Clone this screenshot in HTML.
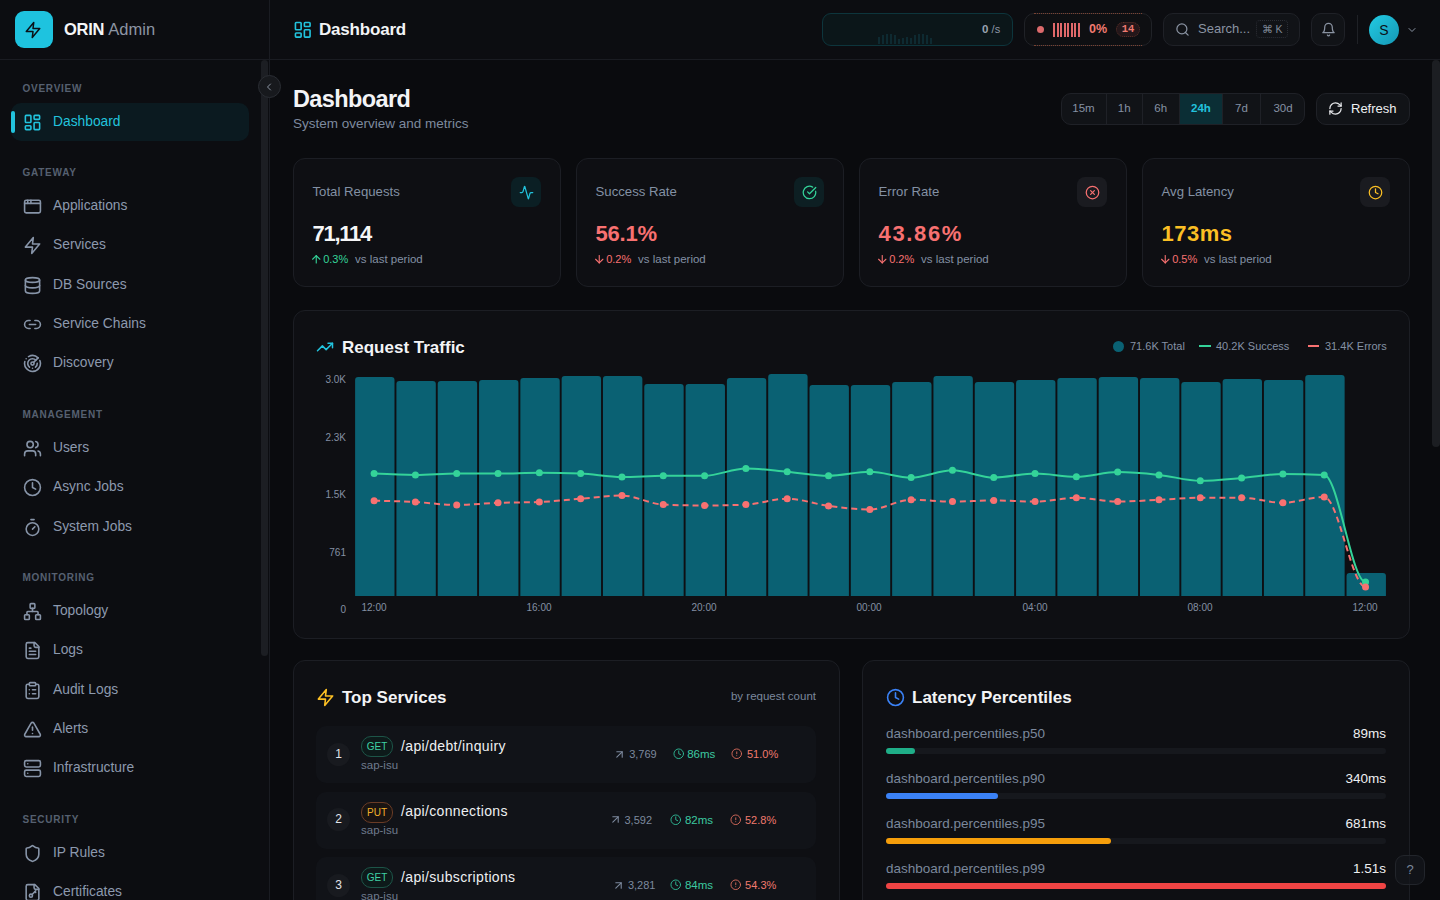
<!DOCTYPE html>
<html><head><meta charset="utf-8"><style>*{box-sizing:border-box;margin:0;padding:0}
html,body{width:1440px;height:900px;overflow:hidden;background:#0a0b0e;font-family:"Liberation Sans",sans-serif;color:#e6e8eb}
.abs{position:absolute}
svg{display:block}
#sb{position:absolute;left:0;top:0;width:270px;height:900px;background:#0c0d11;border-right:1px solid #1a1c22}
#sbh{position:absolute;left:0;top:0;width:269px;height:60px;border-bottom:1px solid #1a1c22}
.logo{position:absolute;left:15px;top:11px;width:38px;height:37px;border-radius:9px;background:#1ec3df}
.brand{position:absolute;left:64px;top:19px;font-size:16.5px;line-height:20px;font-weight:bold;color:#f5f6f7;letter-spacing:-0.3px}
.brand span{font-weight:normal;color:#8d95a3;letter-spacing:0}
.sec{position:absolute;left:22.5px;font-size:10px;line-height:10px;font-weight:bold;letter-spacing:0.75px;color:#566070}
.it{position:absolute;left:11px;width:238px;height:38px;border-radius:10px}
.it svg{position:absolute;left:12px;top:9.6px}
.it .t{position:absolute;left:42px;top:11px;font-size:13.8px;line-height:16px;color:#8c99ae}
.it.act{background:#0b1a20}
.it.act .t{color:#22c3dd}
.it.act:before{content:"";position:absolute;left:0;top:8px;width:4px;height:22px;border-radius:2px;background:#22c3dd}
#hd{position:absolute;left:270px;top:0;width:1170px;height:60px;background:#0c0d11;border-bottom:1px solid #1a1c22}
.card{background:#0e0f13;border:1px solid #1c1e24;border-radius:12px}
.btn{background:#111317;border:1px solid #1f2127;border-radius:10px}
.tw{background:#0b1619;border:1px solid #0d353c;border-radius:9px}
.ew{background:#0e0f12;border:1px solid #202227;border-radius:10px}
</style></head><body>
<div id="sb"><div id="sbh"><div class="logo"><svg style="position:absolute;left:9.4px;top:9.5px" width="18" height="18" viewBox="0 0 24 24" fill="none" stroke="#0a1218" stroke-width="2" stroke-linecap="round" stroke-linejoin="round" ><polygon points="13 2 3 14 12 14 11 22 21 10 12 10 13 2"/></svg></div><div class="brand">ORIN <span>Admin</span></div></div>
<div class="sec" style="top:84px">OVERVIEW</div>
<div class="sec" style="top:168px">GATEWAY</div>
<div class="sec" style="top:410px">MANAGEMENT</div>
<div class="sec" style="top:573px">MONITORING</div>
<div class="sec" style="top:815px">SECURITY</div>
<div class="it act" style="top:103px"><svg width="19" height="19" viewBox="0 0 24 24" fill="none" stroke="#22c3dd" stroke-width="2" stroke-linecap="round" stroke-linejoin="round"><rect width="7" height="9" x="3" y="3" rx="1"/><rect width="7" height="5" x="14" y="3" rx="1"/><rect width="7" height="9" x="14" y="12" rx="1"/><rect width="7" height="5" x="3" y="16" rx="1"/></svg><div class="t">Dashboard</div></div>
<div class="it" style="top:187px"><svg width="19" height="19" viewBox="0 0 24 24" fill="none" stroke="#8794a8" stroke-width="2" stroke-linecap="round" stroke-linejoin="round"><rect x="2" y="4" width="20" height="16" rx="2"/><path d="M10 4v4"/><path d="M2 8h20"/><path d="M6 4v4"/></svg><div class="t">Applications</div></div>
<div class="it" style="top:226px"><svg width="19" height="19" viewBox="0 0 24 24" fill="none" stroke="#8794a8" stroke-width="2" stroke-linecap="round" stroke-linejoin="round"><polygon points="13 2 3 14 12 14 11 22 21 10 12 10 13 2"/></svg><div class="t">Services</div></div>
<div class="it" style="top:266px"><svg width="19" height="19" viewBox="0 0 24 24" fill="none" stroke="#8794a8" stroke-width="2" stroke-linecap="round" stroke-linejoin="round"><ellipse cx="12" cy="5" rx="9" ry="3"/><path d="M3 5V19A9 3 0 0 0 21 19V5"/><path d="M3 12A9 3 0 0 0 21 12"/></svg><div class="t">DB Sources</div></div>
<div class="it" style="top:305px"><svg width="19" height="19" viewBox="0 0 24 24" fill="none" stroke="#8794a8" stroke-width="2" stroke-linecap="round" stroke-linejoin="round"><path d="M9 17H7A5 5 0 0 1 7 7h2"/><path d="M15 7h2a5 5 0 1 1 0 10h-2"/><line x1="8" x2="16" y1="12" y2="12"/></svg><div class="t">Service Chains</div></div>
<div class="it" style="top:344px"><svg width="19" height="19" viewBox="0 0 24 24" fill="none" stroke="#8794a8" stroke-width="2" stroke-linecap="round" stroke-linejoin="round"><path d="M19.07 4.93A10 10 0 0 0 6.99 3.34"/><path d="M4 6h.01"/><path d="M2.29 9.62A10 10 0 1 0 21.31 8.35"/><path d="M16.24 7.76A6 6 0 1 0 8.23 16.67"/><path d="M12 18h.01"/><path d="M17.99 11.66A6 6 0 0 1 15.77 16.67"/><circle cx="12" cy="12" r="2"/><path d="m13.41 10.59 5.66-5.66"/></svg><div class="t">Discovery</div></div>
<div class="it" style="top:429px"><svg width="19" height="19" viewBox="0 0 24 24" fill="none" stroke="#8794a8" stroke-width="2" stroke-linecap="round" stroke-linejoin="round"><path d="M16 21v-2a4 4 0 0 0-4-4H6a4 4 0 0 0-4 4v2"/><circle cx="9" cy="7" r="4"/><path d="M22 21v-2a4 4 0 0 0-3-3.87"/><path d="M16 3.13a4 4 0 0 1 0 7.75"/></svg><div class="t">Users</div></div>
<div class="it" style="top:468px"><svg width="19" height="19" viewBox="0 0 24 24" fill="none" stroke="#8794a8" stroke-width="2" stroke-linecap="round" stroke-linejoin="round"><circle cx="12" cy="12" r="10"/><polyline points="12 6 12 12 16 14"/></svg><div class="t">Async Jobs</div></div>
<div class="it" style="top:508px"><svg width="19" height="19" viewBox="0 0 24 24" fill="none" stroke="#8794a8" stroke-width="2" stroke-linecap="round" stroke-linejoin="round"><line x1="10" x2="14" y1="2" y2="2"/><line x1="12" x2="15" y1="14" y2="11"/><circle cx="12" cy="14" r="8"/></svg><div class="t">System Jobs</div></div>
<div class="it" style="top:592px"><svg width="19" height="19" viewBox="0 0 24 24" fill="none" stroke="#8794a8" stroke-width="2" stroke-linecap="round" stroke-linejoin="round"><rect x="16" y="16" width="6" height="6" rx="1"/><rect x="2" y="16" width="6" height="6" rx="1"/><rect x="9" y="2" width="6" height="6" rx="1"/><path d="M5 16v-3a1 1 0 0 1 1-1h12a1 1 0 0 1 1 1v3"/><path d="M12 12V8"/></svg><div class="t">Topology</div></div>
<div class="it" style="top:631px"><svg width="19" height="19" viewBox="0 0 24 24" fill="none" stroke="#8794a8" stroke-width="2" stroke-linecap="round" stroke-linejoin="round"><path d="M15 2H6a2 2 0 0 0-2 2v16a2 2 0 0 0 2 2h12a2 2 0 0 0 2-2V7Z"/><path d="M14 2v4a2 2 0 0 0 2 2h4"/><path d="M10 9H8"/><path d="M16 13H8"/><path d="M16 17H8"/></svg><div class="t">Logs</div></div>
<div class="it" style="top:671px"><svg width="19" height="19" viewBox="0 0 24 24" fill="none" stroke="#8794a8" stroke-width="2" stroke-linecap="round" stroke-linejoin="round"><rect width="8" height="4" x="8" y="2" rx="1" ry="1"/><path d="M16 4h2a2 2 0 0 1 2 2v14a2 2 0 0 1-2 2H6a2 2 0 0 1-2-2V6a2 2 0 0 1 2-2h2"/><path d="M12 11h4"/><path d="M12 16h4"/><path d="M8 11h.01"/><path d="M8 16h.01"/></svg><div class="t">Audit Logs</div></div>
<div class="it" style="top:710px"><svg width="19" height="19" viewBox="0 0 24 24" fill="none" stroke="#8794a8" stroke-width="2" stroke-linecap="round" stroke-linejoin="round"><path d="m21.73 18-8-14a2 2 0 0 0-3.48 0l-8 14A2 2 0 0 0 4 21h16a2 2 0 0 0 1.73-3"/><path d="M12 9v4"/><path d="M12 17h.01"/></svg><div class="t">Alerts</div></div>
<div class="it" style="top:749px"><svg width="19" height="19" viewBox="0 0 24 24" fill="none" stroke="#8794a8" stroke-width="2" stroke-linecap="round" stroke-linejoin="round"><rect width="20" height="8" x="2" y="2" rx="2" ry="2"/><rect width="20" height="8" x="2" y="14" rx="2" ry="2"/><line x1="6" x2="6.01" y1="6" y2="6"/><line x1="6" x2="6.01" y1="18" y2="18"/></svg><div class="t">Infrastructure</div></div>
<div class="it" style="top:834px"><svg width="19" height="19" viewBox="0 0 24 24" fill="none" stroke="#8794a8" stroke-width="2" stroke-linecap="round" stroke-linejoin="round"><path d="M20 13c0 5-3.5 7.5-7.66 8.95a1 1 0 0 1-.67-.01C7.5 20.5 4 18 4 13V6a1 1 0 0 1 1-1c2 0 4.5-1.2 6.24-2.72a1.17 1.17 0 0 1 1.52 0C14.51 3.81 17 5 19 5a1 1 0 0 1 1 1z"/></svg><div class="t">IP Rules</div></div>
<div class="it" style="top:873px"><svg width="19" height="19" viewBox="0 0 24 24" fill="none" stroke="#8794a8" stroke-width="2" stroke-linecap="round" stroke-linejoin="round"><path d="M15 2H6a2 2 0 0 0-2 2v16a2 2 0 0 0 2 2h12a2 2 0 0 0 2-2V7Z"/><path d="M14 2v4a2 2 0 0 0 2 2h4"/><circle cx="10" cy="16" r="2"/><path d="m16 10-4.5 4.5"/><path d="m15 11 1 1"/></svg><div class="t">Certificates</div></div>
</div>
<div id="hd"></div>
<svg style="position:absolute;left:293.2px;top:19.9px" width="19.5" height="19.5" viewBox="0 0 24 24" fill="none" stroke="#22c3dd" stroke-width="2" stroke-linecap="round" stroke-linejoin="round" ><rect width="7" height="9" x="3" y="3" rx="1"/><rect width="7" height="5" x="14" y="3" rx="1"/><rect width="7" height="9" x="14" y="12" rx="1"/><rect width="7" height="5" x="3" y="16" rx="1"/></svg>
<div class="abs" style="left:319px;top:19.8px;font-size:17px;letter-spacing:-0.2px;line-height:20px;font-weight:bold;color:#f3f4f6">Dashboard</div>
<div class="abs tw" style="left:822px;top:13px;width:191px;height:33px"></div><div class="abs" style="left:878.0px;top:37px;width:2px;height:7px;background:#0e2a31"></div><div class="abs" style="left:882.0px;top:35px;width:2px;height:9px;background:#0e2a31"></div><div class="abs" style="left:886.0px;top:34px;width:2px;height:10px;background:#0e2a31"></div><div class="abs" style="left:890.0px;top:34px;width:2px;height:10px;background:#0e2a31"></div><div class="abs" style="left:894.0px;top:35px;width:2px;height:9px;background:#0e2a31"></div><div class="abs" style="left:898.0px;top:39px;width:2px;height:5px;background:#0e2a31"></div><div class="abs" style="left:902.0px;top:38px;width:2px;height:6px;background:#0e2a31"></div><div class="abs" style="left:906.0px;top:37px;width:2px;height:7px;background:#0e2a31"></div><div class="abs" style="left:910.0px;top:38px;width:2px;height:6px;background:#0e2a31"></div><div class="abs" style="left:914.0px;top:35px;width:2px;height:9px;background:#0e2a31"></div><div class="abs" style="left:918.0px;top:34px;width:2px;height:10px;background:#0e2a31"></div><div class="abs" style="left:922.0px;top:34px;width:2px;height:10px;background:#0e2a31"></div><div class="abs" style="left:926.0px;top:35px;width:2px;height:9px;background:#0e2a31"></div><div class="abs" style="left:930.0px;top:38px;width:2px;height:6px;background:#0e2a31"></div><div class="abs" style="left:982px;top:22px;font-size:11.5px;line-height:14px;color:#8f98a6"><b style="color:#9aa3b0">0</b> <span style="font-size:11px">/s</span></div>
<div class="abs ew" style="left:1024px;top:13px;width:128px;height:33px"></div><div class="abs" style="left:1034px;top:13px;width:108px;height:1px;border-top:1px dotted #7a4232"></div><div class="abs" style="left:1034px;top:45px;width:108px;height:1px;border-top:1px dotted #7a4232"></div><div class="abs" style="left:1037px;top:26px;width:7px;height:7px;border-radius:50%;background:#dc6a6c"></div><div class="abs" style="left:1053.0px;top:23px;width:2.2px;height:14px;background:#e0686a"></div><div class="abs" style="left:1056.5px;top:23px;width:2.2px;height:14px;background:#e0686a"></div><div class="abs" style="left:1060.0px;top:23px;width:2.2px;height:14px;background:#e0686a"></div><div class="abs" style="left:1063.5px;top:23px;width:2.2px;height:14px;background:#e0686a"></div><div class="abs" style="left:1067.0px;top:23px;width:2.2px;height:14px;background:#e0686a"></div><div class="abs" style="left:1070.5px;top:23px;width:2.2px;height:14px;background:#e0686a"></div><div class="abs" style="left:1074.0px;top:23px;width:2.2px;height:14px;background:#e0686a"></div><div class="abs" style="left:1077.5px;top:23px;width:2.2px;height:14px;background:#e0686a"></div><div class="abs" style="left:1089px;top:22px;font-size:12.5px;line-height:15px;font-weight:bold;color:#f07a70">0%</div><div class="abs" style="left:1116px;top:22px;width:24px;height:15px;border-radius:8px;background:#24171a;border:1px dotted #5a3028;font-family:&quot;Liberation Mono&quot;,monospace;font-size:10.5px;line-height:13px;text-align:center;font-weight:bold;color:#f07a70">14</div>
<div class="abs btn" style="left:1163px;top:13px;width:137px;height:33px"></div><svg style="position:absolute;left:1175px;top:22px" width="15" height="15" viewBox="0 0 24 24" fill="none" stroke="#8a93a2" stroke-width="2" stroke-linecap="round" stroke-linejoin="round" ><circle cx="11" cy="11" r="8"/><path d="m21 21-4.3-4.3"/></svg><div class="abs" style="left:1198px;top:21px;font-size:13px;line-height:16px;color:#8a93a2">Search...</div><div class="abs" style="left:1256px;top:20px;width:32px;height:18px;border-radius:4px;border:1px dotted #2c2f36;font-size:10.5px;line-height:16px;text-align:center;color:#7f8896">&#8984; K</div>
<div class="abs btn" style="left:1311px;top:13px;width:34px;height:33px"></div><svg style="position:absolute;left:1320.5px;top:21.5px" width="15" height="15" viewBox="0 0 24 24" fill="none" stroke="#8a93a2" stroke-width="2" stroke-linecap="round" stroke-linejoin="round" ><path d="M6 8a6 6 0 0 1 12 0c0 7 3 9 3 9H3s3-2 3-9"/><path d="M10.3 21a1.94 1.94 0 0 0 3.4 0"/></svg>
<div class="abs" style="left:1357px;top:15px;width:1px;height:29px;background:#1f2126"></div>
<div class="abs" style="left:1369px;top:15px;width:30px;height:30px;border-radius:50%;background:linear-gradient(135deg,#22cbe3,#1597b5);font-size:14px;line-height:30px;text-align:center;color:#0b1016">S</div>
<svg style="position:absolute;left:1406px;top:24px" width="12" height="12" viewBox="0 0 24 24" fill="none" stroke="#8a93a2" stroke-width="2" stroke-linecap="round" stroke-linejoin="round" ><path d="m6 9 6 6 6-6"/></svg>
<div class="abs" style="left:293px;top:85.8px;font-size:23.5px;letter-spacing:-0.6px;line-height:26px;font-weight:bold;color:#f3f4f6">Dashboard</div>
<div class="abs" style="left:293px;top:116px;font-size:13.5px;line-height:16px;color:#7d8a9e">System overview and metrics</div>
<div class="abs btn" style="left:1061px;top:93px;width:244px;height:32px;overflow:hidden"><div class="abs" style="left:-1px;top:0;width:45px;height:30px;font-size:11.5px;line-height:29px;text-align:center;color:#8591a3;">15m</div><div class="abs" style="left:44px;top:0;width:35.5px;height:30px;border-left:1px solid #1f2127;font-size:11.5px;line-height:29px;text-align:center;color:#8591a3;">1h</div><div class="abs" style="left:79.5px;top:0;width:37.5px;height:30px;border-left:1px solid #1f2127;font-size:11.5px;line-height:29px;text-align:center;color:#8591a3;">6h</div><div class="abs" style="left:117px;top:0;width:43px;height:30px;background:#0b2e35;border-left:1px solid #1f2127;font-size:11.5px;line-height:29px;text-align:center;color:#22c3dd;font-weight:bold;">24h</div><div class="abs" style="left:160px;top:0;width:38px;height:30px;border-left:1px solid #1f2127;font-size:11.5px;line-height:29px;text-align:center;color:#8591a3;">7d</div><div class="abs" style="left:198px;top:0;width:45px;height:30px;border-left:1px solid #1f2127;font-size:11.5px;line-height:29px;text-align:center;color:#8591a3;">30d</div></div>
<div class="abs btn" style="left:1316px;top:93px;width:94px;height:32px"></div><svg style="position:absolute;left:1328px;top:101px" width="15" height="15" viewBox="0 0 24 24" fill="none" stroke="#e6e8eb" stroke-width="2" stroke-linecap="round" stroke-linejoin="round" ><path d="M3 12a9 9 0 0 1 9-9 9.75 9.75 0 0 1 6.74 2.74L21 8"/><path d="M21 3v5h-5"/><path d="M21 12a9 9 0 0 1-9 9 9.75 9.75 0 0 1-6.74-2.74L3 16"/><path d="M8 16H3v5"/></svg><div class="abs" style="left:1351px;top:101px;font-size:13px;line-height:16px;color:#eef0f2">Refresh</div>
<div class="abs card" style="left:293px;top:158px;width:268px;height:129px"><div class="abs" style="left:18.5px;top:25px;font-size:13.2px;line-height:16px;color:#8391a4">Total Requests</div><div class="abs" style="left:217px;top:17.8px;width:30px;height:30px;border-radius:8px;background:#0b1f24"></div><svg style="position:absolute;left:224.5px;top:25.5px" width="15" height="15" viewBox="0 0 24 24" fill="none" stroke="#22c3dd" stroke-width="2" stroke-linecap="round" stroke-linejoin="round" ><path d="M22 12h-2.48a2 2 0 0 0-1.93 1.46l-2.35 8.36a.25.25 0 0 1-.48 0L9.24 2.18a.25.25 0 0 0-.48 0l-2.35 8.36A2 2 0 0 1 4.49 12H2"/></svg><div class="abs" style="left:18.5px;top:61.5px;font-size:22px;line-height:26px;font-weight:bold;color:#f5f6f7;letter-spacing:-1.26px">71,114</div><svg style="position:absolute;left:15.75px;top:94.2px" width="12.5" height="12.5" viewBox="0 0 24 24" fill="none" stroke="#34d399" stroke-width="2.1" stroke-linecap="round" stroke-linejoin="round" ><path d="m5 12 7-7 7 7"/><path d="M12 19V5"/></svg><div class="abs" style="left:29.2px;top:93px;font-size:11px;line-height:14px;color:#34d399">0.3%</div><div class="abs" style="left:61px;top:93px;font-size:11.5px;line-height:14px;color:#8391a4">vs last period</div></div>
<div class="abs card" style="left:576px;top:158px;width:268px;height:129px"><div class="abs" style="left:18.5px;top:25px;font-size:13.2px;line-height:16px;color:#8391a4">Success Rate</div><div class="abs" style="left:217px;top:17.8px;width:30px;height:30px;border-radius:8px;background:#0d1f23"></div><svg style="position:absolute;left:224.5px;top:25.5px" width="15" height="15" viewBox="0 0 24 24" fill="none" stroke="#34d399" stroke-width="2" stroke-linecap="round" stroke-linejoin="round" ><path d="M21.801 10A10 10 0 1 1 17 3.335"/><path d="m9 11 3 3L22 4"/></svg><div class="abs" style="left:18.5px;top:61.5px;font-size:22px;line-height:26px;font-weight:bold;color:#f87171;letter-spacing:-0.2px">56.1%</div><svg style="position:absolute;left:15.75px;top:94.2px" width="12.5" height="12.5" viewBox="0 0 24 24" fill="none" stroke="#f87171" stroke-width="2.1" stroke-linecap="round" stroke-linejoin="round" ><path d="M12 5v14"/><path d="m19 12-7 7-7-7"/></svg><div class="abs" style="left:29.2px;top:93px;font-size:11px;line-height:14px;color:#f87171">0.2%</div><div class="abs" style="left:61px;top:93px;font-size:11.5px;line-height:14px;color:#8391a4">vs last period</div></div>
<div class="abs card" style="left:859px;top:158px;width:268px;height:129px"><div class="abs" style="left:18.5px;top:25px;font-size:13.2px;line-height:16px;color:#8391a4">Error Rate</div><div class="abs" style="left:217px;top:17.8px;width:30px;height:30px;border-radius:8px;background:#1a1b20"></div><svg style="position:absolute;left:224.5px;top:25.5px" width="15" height="15" viewBox="0 0 24 24" fill="none" stroke="#f87171" stroke-width="2" stroke-linecap="round" stroke-linejoin="round" ><circle cx="12" cy="12" r="10"/><path d="m15 9-6 6"/><path d="m9 9 6 6"/></svg><div class="abs" style="left:18.5px;top:61.5px;font-size:22px;line-height:26px;font-weight:bold;color:#f87171;letter-spacing:1.66px">43.86%</div><svg style="position:absolute;left:15.75px;top:94.2px" width="12.5" height="12.5" viewBox="0 0 24 24" fill="none" stroke="#f87171" stroke-width="2.1" stroke-linecap="round" stroke-linejoin="round" ><path d="M12 5v14"/><path d="m19 12-7 7-7-7"/></svg><div class="abs" style="left:29.2px;top:93px;font-size:11px;line-height:14px;color:#f87171">0.2%</div><div class="abs" style="left:61px;top:93px;font-size:11.5px;line-height:14px;color:#8391a4">vs last period</div></div>
<div class="abs card" style="left:1142px;top:158px;width:268px;height:129px"><div class="abs" style="left:18.5px;top:25px;font-size:13.2px;line-height:16px;color:#8391a4">Avg Latency</div><div class="abs" style="left:217px;top:17.8px;width:30px;height:30px;border-radius:8px;background:#1a1b20"></div><svg style="position:absolute;left:224.5px;top:25.5px" width="15" height="15" viewBox="0 0 24 24" fill="none" stroke="#fbbf24" stroke-width="2" stroke-linecap="round" stroke-linejoin="round" ><circle cx="12" cy="12" r="10"/><polyline points="12 6 12 12 16 14"/></svg><div class="abs" style="left:18.5px;top:61.5px;font-size:22px;line-height:26px;font-weight:bold;color:#fbbf24;letter-spacing:0.5px">173ms</div><svg style="position:absolute;left:15.75px;top:94.2px" width="12.5" height="12.5" viewBox="0 0 24 24" fill="none" stroke="#f87171" stroke-width="2.1" stroke-linecap="round" stroke-linejoin="round" ><path d="M12 5v14"/><path d="m19 12-7 7-7-7"/></svg><div class="abs" style="left:29.2px;top:93px;font-size:11px;line-height:14px;color:#f87171">0.5%</div><div class="abs" style="left:61px;top:93px;font-size:11.5px;line-height:14px;color:#8391a4">vs last period</div></div>
<div class="abs card" style="left:293px;top:310px;width:1117px;height:329px"></div>
<svg style="position:absolute;left:316px;top:338px" width="18" height="18" viewBox="0 0 24 24" fill="none" stroke="#22c3dd" stroke-width="2" stroke-linecap="round" stroke-linejoin="round" ><polyline points="22 7 13.5 15.5 8.5 10.5 2 17"/><polyline points="16 7 22 7 22 13"/></svg>
<div class="abs" style="left:342px;top:338px;font-size:17px;line-height:20px;font-weight:bold;color:#f3f4f6">Request Traffic</div>
<div class="abs" style="left:1113px;top:341px;width:11px;height:11px;border-radius:50%;background:#0a6173"></div><div class="abs" style="left:1130px;top:340px;font-size:11px;line-height:13px;color:#8591a4">71.6K Total</div>
<div class="abs" style="left:1199px;top:345px;width:12px;height:2px;background:#34d399"></div><div class="abs" style="left:1216px;top:340px;font-size:11px;line-height:13px;color:#8591a4">40.2K Success</div>
<div class="abs" style="left:1308px;top:345px;width:11px;height:2px;background:#f87171"></div><div class="abs" style="left:1325px;top:340px;font-size:11px;line-height:13px;color:#8591a4">31.4K Errors</div>
<svg class="abs" style="left:0;top:0" width="1440" height="900" viewBox="0 0 1440 900">
<path d="M355.10 596 V380 Q355.10 377 358.10 377 H391.50 Q394.50 377 394.50 380 V596 Z" fill="#0a6173"/>
<path d="M396.41 596 V384 Q396.41 381 399.41 381 H432.81 Q435.81 381 435.81 384 V596 Z" fill="#0a6173"/>
<path d="M437.72 596 V384 Q437.72 381 440.72 381 H474.12 Q477.12 381 477.12 384 V596 Z" fill="#0a6173"/>
<path d="M479.03 596 V383 Q479.03 380 482.03 380 H515.43 Q518.43 380 518.43 383 V596 Z" fill="#0a6173"/>
<path d="M520.34 596 V381 Q520.34 378 523.34 378 H556.74 Q559.74 378 559.74 381 V596 Z" fill="#0a6173"/>
<path d="M561.65 596 V379 Q561.65 376 564.65 376 H598.05 Q601.05 376 601.05 379 V596 Z" fill="#0a6173"/>
<path d="M602.96 596 V379 Q602.96 376 605.96 376 H639.36 Q642.36 376 642.36 379 V596 Z" fill="#0a6173"/>
<path d="M644.27 596 V387 Q644.27 384 647.27 384 H680.67 Q683.67 384 683.67 387 V596 Z" fill="#0a6173"/>
<path d="M685.58 596 V387 Q685.58 384 688.58 384 H721.98 Q724.98 384 724.98 387 V596 Z" fill="#0a6173"/>
<path d="M726.89 596 V381 Q726.89 378 729.89 378 H763.29 Q766.29 378 766.29 381 V596 Z" fill="#0a6173"/>
<path d="M768.20 596 V377 Q768.20 374 771.20 374 H804.60 Q807.60 374 807.60 377 V596 Z" fill="#0a6173"/>
<path d="M809.51 596 V388 Q809.51 385 812.51 385 H845.91 Q848.91 385 848.91 388 V596 Z" fill="#0a6173"/>
<path d="M850.82 596 V388 Q850.82 385 853.82 385 H887.22 Q890.22 385 890.22 388 V596 Z" fill="#0a6173"/>
<path d="M892.13 596 V385 Q892.13 382 895.13 382 H928.53 Q931.53 382 931.53 385 V596 Z" fill="#0a6173"/>
<path d="M933.44 596 V379 Q933.44 376 936.44 376 H969.84 Q972.84 376 972.84 379 V596 Z" fill="#0a6173"/>
<path d="M974.75 596 V385 Q974.75 382 977.75 382 H1011.15 Q1014.15 382 1014.15 385 V596 Z" fill="#0a6173"/>
<path d="M1016.06 596 V383 Q1016.06 380 1019.06 380 H1052.46 Q1055.46 380 1055.46 383 V596 Z" fill="#0a6173"/>
<path d="M1057.37 596 V381 Q1057.37 378 1060.37 378 H1093.77 Q1096.77 378 1096.77 381 V596 Z" fill="#0a6173"/>
<path d="M1098.68 596 V380 Q1098.68 377 1101.68 377 H1135.08 Q1138.08 377 1138.08 380 V596 Z" fill="#0a6173"/>
<path d="M1139.99 596 V381 Q1139.99 378 1142.99 378 H1176.39 Q1179.39 378 1179.39 381 V596 Z" fill="#0a6173"/>
<path d="M1181.30 596 V385 Q1181.30 382 1184.30 382 H1217.70 Q1220.70 382 1220.70 385 V596 Z" fill="#0a6173"/>
<path d="M1222.61 596 V382 Q1222.61 379 1225.61 379 H1259.01 Q1262.01 379 1262.01 382 V596 Z" fill="#0a6173"/>
<path d="M1263.92 596 V383 Q1263.92 380 1266.92 380 H1300.32 Q1303.32 380 1303.32 383 V596 Z" fill="#0a6173"/>
<path d="M1305.23 596 V378 Q1305.23 375 1308.23 375 H1341.63 Q1344.63 375 1344.63 378 V596 Z" fill="#0a6173"/>
<path d="M1346.54 596 V576 Q1346.54 573 1349.54 573 H1382.94 Q1385.94 573 1385.94 576 V596 Z" fill="#0a6173"/>
<path d="M374.10 473.60 C387.87 474.30 401.64 475.00 415.41 475.00 C429.18 475.00 442.95 473.60 456.72 473.60 C470.49 473.60 484.26 473.60 498.03 473.60 C511.80 473.60 525.57 472.70 539.34 472.70 C553.11 472.70 566.88 473.00 580.65 473.60 C594.42 474.20 608.19 477.00 621.96 477.00 C635.73 477.00 649.50 475.80 663.27 475.80 C677.04 475.80 690.81 475.80 704.58 475.80 C718.35 475.80 732.12 468.50 745.89 468.50 C759.66 468.50 773.43 470.58 787.20 471.80 C800.97 473.02 814.74 475.80 828.51 475.80 C842.28 475.80 856.05 471.80 869.82 471.80 C883.59 471.80 897.36 477.60 911.13 477.60 C924.90 477.60 938.67 470.30 952.44 470.30 C966.21 470.30 979.98 477.60 993.75 477.60 C1007.52 477.60 1021.29 473.60 1035.06 473.60 C1048.83 473.60 1062.60 476.70 1076.37 476.70 C1090.14 476.70 1103.91 472.10 1117.68 472.10 C1131.45 472.10 1145.22 473.45 1158.99 474.90 C1172.76 476.35 1186.53 480.80 1200.30 480.80 C1214.07 480.80 1227.84 479.03 1241.61 477.90 C1255.38 476.77 1269.15 474.00 1282.92 474.00 C1296.69 474.00 1310.46 474.30 1324.23 474.90 C1338.00 475.50 1351.77 582.00 1365.54 582.00" fill="none" stroke="#34d399" stroke-width="2"/>
<path d="M374.10 500.70 C387.87 500.99 401.64 501.28 415.41 502.00 C429.18 502.72 442.95 505.00 456.72 505.00 C470.49 505.00 484.26 503.30 498.03 502.80 C511.80 502.30 525.57 502.53 539.34 502.00 C553.11 501.47 566.88 499.77 580.65 498.70 C594.42 497.63 608.19 495.60 621.96 495.60 C635.73 495.60 649.50 504.00 663.27 504.60 C677.04 505.20 690.81 505.50 704.58 505.50 C718.35 505.50 732.12 505.20 745.89 504.60 C759.66 504.00 773.43 498.70 787.20 498.70 C800.97 498.70 814.74 504.10 828.51 505.90 C842.28 507.70 856.05 509.50 869.82 509.50 C883.59 509.50 897.36 499.80 911.13 499.80 C924.90 499.80 938.67 501.60 952.44 501.60 C966.21 501.60 979.98 500.50 993.75 500.50 C1007.52 500.50 1021.29 501.60 1035.06 501.60 C1048.83 501.60 1062.60 497.80 1076.37 497.80 C1090.14 497.80 1103.91 501.60 1117.68 501.60 C1131.45 501.60 1145.22 500.43 1158.99 499.80 C1172.76 499.17 1186.53 497.80 1200.30 497.80 C1214.07 497.80 1227.84 497.80 1241.61 497.80 C1255.38 497.80 1269.15 502.80 1282.92 502.80 C1296.69 502.80 1310.46 496.90 1324.23 496.90 C1338.00 496.90 1351.77 587.00 1365.54 587.00" fill="none" stroke="#f87171" stroke-width="2" stroke-dasharray="6 4"/>
<circle cx="374.10" cy="473.6" r="3.5" fill="#34d399"/>
<circle cx="415.41" cy="475" r="3.5" fill="#34d399"/>
<circle cx="456.72" cy="473.6" r="3.5" fill="#34d399"/>
<circle cx="498.03" cy="473.6" r="3.5" fill="#34d399"/>
<circle cx="539.34" cy="472.7" r="3.5" fill="#34d399"/>
<circle cx="580.65" cy="473.6" r="3.5" fill="#34d399"/>
<circle cx="621.96" cy="477" r="3.5" fill="#34d399"/>
<circle cx="663.27" cy="475.8" r="3.5" fill="#34d399"/>
<circle cx="704.58" cy="475.8" r="3.5" fill="#34d399"/>
<circle cx="745.89" cy="468.5" r="3.5" fill="#34d399"/>
<circle cx="787.20" cy="471.8" r="3.5" fill="#34d399"/>
<circle cx="828.51" cy="475.8" r="3.5" fill="#34d399"/>
<circle cx="869.82" cy="471.8" r="3.5" fill="#34d399"/>
<circle cx="911.13" cy="477.6" r="3.5" fill="#34d399"/>
<circle cx="952.44" cy="470.3" r="3.5" fill="#34d399"/>
<circle cx="993.75" cy="477.6" r="3.5" fill="#34d399"/>
<circle cx="1035.06" cy="473.6" r="3.5" fill="#34d399"/>
<circle cx="1076.37" cy="476.7" r="3.5" fill="#34d399"/>
<circle cx="1117.68" cy="472.1" r="3.5" fill="#34d399"/>
<circle cx="1158.99" cy="474.9" r="3.5" fill="#34d399"/>
<circle cx="1200.30" cy="480.8" r="3.5" fill="#34d399"/>
<circle cx="1241.61" cy="477.9" r="3.5" fill="#34d399"/>
<circle cx="1282.92" cy="474" r="3.5" fill="#34d399"/>
<circle cx="1324.23" cy="474.9" r="3.5" fill="#34d399"/>
<circle cx="1365.54" cy="582" r="3.5" fill="#34d399"/>
<circle cx="374.10" cy="500.7" r="3.5" fill="#f87171"/>
<circle cx="415.41" cy="502" r="3.5" fill="#f87171"/>
<circle cx="456.72" cy="505" r="3.5" fill="#f87171"/>
<circle cx="498.03" cy="502.8" r="3.5" fill="#f87171"/>
<circle cx="539.34" cy="502" r="3.5" fill="#f87171"/>
<circle cx="580.65" cy="498.7" r="3.5" fill="#f87171"/>
<circle cx="621.96" cy="495.6" r="3.5" fill="#f87171"/>
<circle cx="663.27" cy="504.6" r="3.5" fill="#f87171"/>
<circle cx="704.58" cy="505.5" r="3.5" fill="#f87171"/>
<circle cx="745.89" cy="504.6" r="3.5" fill="#f87171"/>
<circle cx="787.20" cy="498.7" r="3.5" fill="#f87171"/>
<circle cx="828.51" cy="505.9" r="3.5" fill="#f87171"/>
<circle cx="869.82" cy="509.5" r="3.5" fill="#f87171"/>
<circle cx="911.13" cy="499.8" r="3.5" fill="#f87171"/>
<circle cx="952.44" cy="501.6" r="3.5" fill="#f87171"/>
<circle cx="993.75" cy="500.5" r="3.5" fill="#f87171"/>
<circle cx="1035.06" cy="501.6" r="3.5" fill="#f87171"/>
<circle cx="1076.37" cy="497.8" r="3.5" fill="#f87171"/>
<circle cx="1117.68" cy="501.6" r="3.5" fill="#f87171"/>
<circle cx="1158.99" cy="499.8" r="3.5" fill="#f87171"/>
<circle cx="1200.30" cy="497.8" r="3.5" fill="#f87171"/>
<circle cx="1241.61" cy="497.8" r="3.5" fill="#f87171"/>
<circle cx="1282.92" cy="502.8" r="3.5" fill="#f87171"/>
<circle cx="1324.23" cy="496.9" r="3.5" fill="#f87171"/>
<circle cx="1365.54" cy="587" r="3.5" fill="#f87171"/>
<text x="346" y="382.5" text-anchor="end" font-size="10" fill="#8490a3" font-family="Liberation Sans">3.0K</text>
<text x="346" y="440.5" text-anchor="end" font-size="10" fill="#8490a3" font-family="Liberation Sans">2.3K</text>
<text x="346" y="497.5" text-anchor="end" font-size="10" fill="#8490a3" font-family="Liberation Sans">1.5K</text>
<text x="346" y="555.5" text-anchor="end" font-size="10" fill="#8490a3" font-family="Liberation Sans">761</text>
<text x="346" y="612.5" text-anchor="end" font-size="10" fill="#8490a3" font-family="Liberation Sans">0</text>
<text x="374" y="611" text-anchor="middle" font-size="10" fill="#8490a3" font-family="Liberation Sans">12:00</text>
<text x="539" y="611" text-anchor="middle" font-size="10" fill="#8490a3" font-family="Liberation Sans">16:00</text>
<text x="704" y="611" text-anchor="middle" font-size="10" fill="#8490a3" font-family="Liberation Sans">20:00</text>
<text x="869" y="611" text-anchor="middle" font-size="10" fill="#8490a3" font-family="Liberation Sans">00:00</text>
<text x="1035" y="611" text-anchor="middle" font-size="10" fill="#8490a3" font-family="Liberation Sans">04:00</text>
<text x="1200" y="611" text-anchor="middle" font-size="10" fill="#8490a3" font-family="Liberation Sans">08:00</text>
<text x="1365" y="611" text-anchor="middle" font-size="10" fill="#8490a3" font-family="Liberation Sans">12:00</text>
</svg>
<div class="abs card" style="left:293px;top:660px;width:547px;height:300px"></div>
<svg style="position:absolute;left:315.9px;top:688px" width="19" height="19" viewBox="0 0 24 24" fill="none" stroke="#fbbf24" stroke-width="2" stroke-linecap="round" stroke-linejoin="round" ><polygon points="13 2 3 14 12 14 11 22 21 10 12 10 13 2"/></svg>
<div class="abs" style="left:342px;top:688px;font-size:17px;line-height:20px;font-weight:bold;color:#f3f4f6">Top Services</div>
<div class="abs" style="left:680px;top:689.5px;width:136px;text-align:right;font-size:11.5px;line-height:13px;color:#7b889c">by request count</div>
<div class="abs" style="left:316px;top:726.0px;width:500px;height:57px;border-radius:10px;background:#111318"></div>
<div class="abs" style="left:327px;top:742.5px;width:23px;height:23px;border-radius:50%;background:#181a1f;font-size:12px;line-height:23px;text-align:center;color:#e2e5ea">1</div>
<div class="abs" style="left:361px;top:736.0px;width:32px;height:21px;border-radius:10px;background:#0d1a1a;border:1px solid #1d5548;font-size:10px;line-height:19px;text-align:center;color:#3fd0a4">GET</div>
<div class="abs" style="left:401px;top:737.5px;font-size:14px;letter-spacing:0.35px;line-height:16px;color:#eef0f2">/api/debt/inquiry</div>
<div class="abs" style="left:361px;top:758.5px;font-size:11.5px;line-height:13px;color:#6f7b8e">sap-isu</div>
<svg style="position:absolute;left:613.25px;top:747.7px" width="13" height="13" viewBox="0 0 24 24" fill="none" stroke="#7d8a9e" stroke-width="2" stroke-linecap="round" stroke-linejoin="round" ><path d="M7 7h10v10"/><path d="M7 17 17 7"/></svg>
<div class="abs" style="left:629.2px;top:747.2px;font-size:11px;line-height:14px;color:#7d8a9e">3,769</div>
<svg style="position:absolute;left:672.7px;top:748.45px" width="11.5" height="11.5" viewBox="0 0 24 24" fill="none" stroke="#2fb592" stroke-width="2" stroke-linecap="round" stroke-linejoin="round" ><circle cx="12" cy="12" r="10"/><polyline points="12 6 12 12 16 14"/></svg>
<div class="abs" style="left:687.2px;top:747.2px;font-size:11.5px;line-height:14px;color:#3cc9a0">86ms</div>
<svg style="position:absolute;left:731.4px;top:748.45px" width="11.5" height="11.5" viewBox="0 0 24 24" fill="none" stroke="#d2695a" stroke-width="2" stroke-linecap="round" stroke-linejoin="round" ><circle cx="12" cy="12" r="10"/><line x1="12" x2="12" y1="8" y2="12"/><line x1="12" x2="12.01" y1="16" y2="16"/></svg>
<div class="abs" style="left:747px;top:747.2px;font-size:11px;line-height:14px;color:#f07a6e">51.0%</div>
<div class="abs" style="left:316px;top:791.5px;width:500px;height:57px;border-radius:10px;background:#111318"></div>
<div class="abs" style="left:327px;top:808.0px;width:23px;height:23px;border-radius:50%;background:#181a1f;font-size:12px;line-height:23px;text-align:center;color:#e2e5ea">2</div>
<div class="abs" style="left:361px;top:801.5px;width:32px;height:21px;border-radius:10px;background:#1a1412;border:1px solid #6a3c26;font-size:10px;line-height:19px;text-align:center;color:#f2b12a">PUT</div>
<div class="abs" style="left:401px;top:803.0px;font-size:14px;letter-spacing:0.35px;line-height:16px;color:#eef0f2">/api/connections</div>
<div class="abs" style="left:361px;top:824.0px;font-size:11.5px;line-height:13px;color:#6f7b8e">sap-isu</div>
<svg style="position:absolute;left:609.25px;top:813.2px" width="13" height="13" viewBox="0 0 24 24" fill="none" stroke="#7d8a9e" stroke-width="2" stroke-linecap="round" stroke-linejoin="round" ><path d="M7 7h10v10"/><path d="M7 17 17 7"/></svg>
<div class="abs" style="left:624.5px;top:812.7px;font-size:11px;line-height:14px;color:#7d8a9e">3,592</div>
<svg style="position:absolute;left:669.7px;top:813.95px" width="11.5" height="11.5" viewBox="0 0 24 24" fill="none" stroke="#2fb592" stroke-width="2" stroke-linecap="round" stroke-linejoin="round" ><circle cx="12" cy="12" r="10"/><polyline points="12 6 12 12 16 14"/></svg>
<div class="abs" style="left:684.9000000000001px;top:812.7px;font-size:11.5px;line-height:14px;color:#3cc9a0">82ms</div>
<svg style="position:absolute;left:729.5px;top:813.95px" width="11.5" height="11.5" viewBox="0 0 24 24" fill="none" stroke="#d2695a" stroke-width="2" stroke-linecap="round" stroke-linejoin="round" ><circle cx="12" cy="12" r="10"/><line x1="12" x2="12" y1="8" y2="12"/><line x1="12" x2="12.01" y1="16" y2="16"/></svg>
<div class="abs" style="left:745px;top:812.7px;font-size:11px;line-height:14px;color:#f07a6e">52.8%</div>
<div class="abs" style="left:316px;top:857.0px;width:500px;height:57px;border-radius:10px;background:#111318"></div>
<div class="abs" style="left:327px;top:873.5px;width:23px;height:23px;border-radius:50%;background:#181a1f;font-size:12px;line-height:23px;text-align:center;color:#e2e5ea">3</div>
<div class="abs" style="left:361px;top:867.0px;width:32px;height:21px;border-radius:10px;background:#0d1a1a;border:1px solid #1d5548;font-size:10px;line-height:19px;text-align:center;color:#3fd0a4">GET</div>
<div class="abs" style="left:401px;top:868.5px;font-size:14px;letter-spacing:0.35px;line-height:16px;color:#eef0f2">/api/subscriptions</div>
<div class="abs" style="left:361px;top:889.5px;font-size:11.5px;line-height:13px;color:#6f7b8e">sap-isu</div>
<svg style="position:absolute;left:611.55px;top:878.7px" width="13" height="13" viewBox="0 0 24 24" fill="none" stroke="#7d8a9e" stroke-width="2" stroke-linecap="round" stroke-linejoin="round" ><path d="M7 7h10v10"/><path d="M7 17 17 7"/></svg>
<div class="abs" style="left:627.9000000000001px;top:878.2px;font-size:11px;line-height:14px;color:#7d8a9e">3,281</div>
<svg style="position:absolute;left:669.6px;top:879.45px" width="11.5" height="11.5" viewBox="0 0 24 24" fill="none" stroke="#2fb592" stroke-width="2" stroke-linecap="round" stroke-linejoin="round" ><circle cx="12" cy="12" r="10"/><polyline points="12 6 12 12 16 14"/></svg>
<div class="abs" style="left:684.9000000000001px;top:878.2px;font-size:11.5px;line-height:14px;color:#3cc9a0">84ms</div>
<svg style="position:absolute;left:729.5px;top:879.45px" width="11.5" height="11.5" viewBox="0 0 24 24" fill="none" stroke="#d2695a" stroke-width="2" stroke-linecap="round" stroke-linejoin="round" ><circle cx="12" cy="12" r="10"/><line x1="12" x2="12" y1="8" y2="12"/><line x1="12" x2="12.01" y1="16" y2="16"/></svg>
<div class="abs" style="left:745.1px;top:878.2px;font-size:11px;line-height:14px;color:#f07a6e">54.3%</div>
<div class="abs card" style="left:862px;top:660px;width:548px;height:300px"></div>
<svg style="position:absolute;left:885.5px;top:688px" width="19" height="19" viewBox="0 0 24 24" fill="none" stroke="#3b82f6" stroke-width="2" stroke-linecap="round" stroke-linejoin="round" ><circle cx="12" cy="12" r="10"/><polyline points="12 6 12 12 16 14"/></svg>
<div class="abs" style="left:912px;top:688px;font-size:17px;line-height:20px;font-weight:bold;color:#f3f4f6">Latency Percentiles</div>
<div class="abs" style="left:886px;top:726px;font-size:13.5px;line-height:16px;color:#7b889c">dashboard.percentiles.p50</div>
<div class="abs" style="left:1286px;top:726px;width:100px;text-align:right;font-size:13.5px;line-height:16px;color:#eef0f2">89ms</div>
<div class="abs" style="left:886px;top:748.3px;width:500px;height:6px;border-radius:3px;background:#16181d"></div>
<div class="abs" style="left:886px;top:748.3px;width:29px;height:6px;border-radius:3px;background:#1fae88"></div>
<div class="abs" style="left:886px;top:771px;font-size:13.5px;line-height:16px;color:#7b889c">dashboard.percentiles.p90</div>
<div class="abs" style="left:1286px;top:771px;width:100px;text-align:right;font-size:13.5px;line-height:16px;color:#eef0f2">340ms</div>
<div class="abs" style="left:886px;top:793.3px;width:500px;height:6px;border-radius:3px;background:#16181d"></div>
<div class="abs" style="left:886px;top:793.3px;width:112px;height:6px;border-radius:3px;background:#3b82f6"></div>
<div class="abs" style="left:886px;top:816px;font-size:13.5px;line-height:16px;color:#7b889c">dashboard.percentiles.p95</div>
<div class="abs" style="left:1286px;top:816px;width:100px;text-align:right;font-size:13.5px;line-height:16px;color:#eef0f2">681ms</div>
<div class="abs" style="left:886px;top:838.3px;width:500px;height:6px;border-radius:3px;background:#16181d"></div>
<div class="abs" style="left:886px;top:838.3px;width:225px;height:6px;border-radius:3px;background:#f59e0b"></div>
<div class="abs" style="left:886px;top:861px;font-size:13.5px;line-height:16px;color:#7b889c">dashboard.percentiles.p99</div>
<div class="abs" style="left:1286px;top:861px;width:100px;text-align:right;font-size:13.5px;line-height:16px;color:#eef0f2">1.51s</div>
<div class="abs" style="left:886px;top:883.3px;width:500px;height:6px;border-radius:3px;background:#16181d"></div>
<div class="abs" style="left:886px;top:883.3px;width:500px;height:6px;border-radius:3px;background:#ef4444"></div>
<div class="abs" style="left:1395px;top:855px;width:30px;height:30px;border-radius:9px;background:rgba(20,23,28,0.75);border:1px solid #22252b;font-size:13px;line-height:28px;text-align:center;color:#7a879a">?</div>
<div class="abs" style="left:1432px;top:60px;width:8px;height:387px;border-radius:4px;background:#1c1e22"></div>
<div class="abs" style="left:261px;top:60px;width:7px;height:596px;border-radius:4px;background:#1c1e23"></div>
<div class="abs" style="left:258px;top:75px;width:23px;height:23px;border-radius:50%;background:#17191d;border:1px solid #2a2d33"></div><svg style="position:absolute;left:263px;top:80.5px" width="12" height="12" viewBox="0 0 24 24" fill="none" stroke="#8d96a4" stroke-width="2" stroke-linecap="round" stroke-linejoin="round" ><path d="m15 18-6-6 6-6"/></svg>
</body></html>
